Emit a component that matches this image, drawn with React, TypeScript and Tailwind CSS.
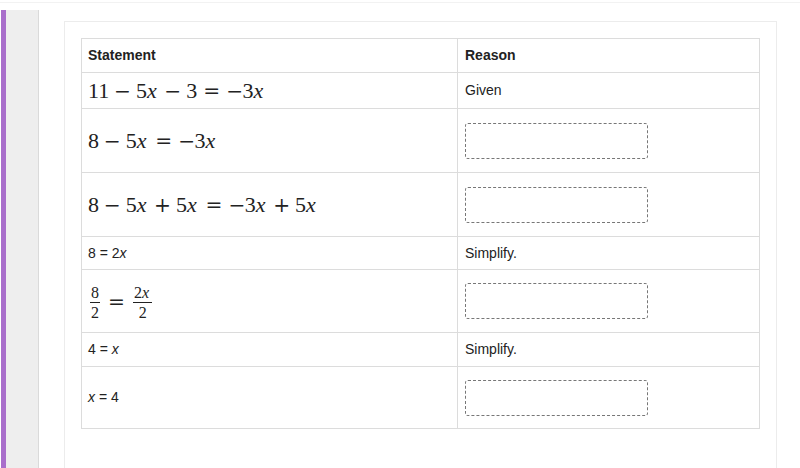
import React from 'react'

const serif = { fontFamily: '"Liberation Serif", "Times New Roman", serif' }
const opFont = { fontFamily: '"DejaVu Serif", "Liberation Serif", serif' }

// glyph boxes sized like the TeX metrics so the equations take the same room
function Minus() {
  return (
    <span style={opFont} className="inline-block w-[0.8em] text-center text-[0.92em]">−</span>
  )
}

function Bin({ op }: { op: string }) {
  return (
    <span style={opFont} className="inline-block mx-[0.2em] w-[0.92em] text-center text-[0.92em]">
      {op}
    </span>
  )
}

function Rel({ op }: { op: string }) {
  return (
    <span style={opFont} className="inline-block mx-[0.26em] w-[0.92em] text-center text-[0.92em]">
      {op}
    </span>
  )
}

function X() {
  return <i className="inline-block w-[0.57em] italic">x</i>
}

function Frac({ top, bottom }: { top: React.ReactNode; bottom: React.ReactNode }) {
  return (
    <span className="inline-flex flex-col items-center align-middle text-[16px] leading-[14px] mx-[2px]">
      <span className="px-[1px] pb-[2px]">{top}</span>
      <span className="h-px w-full bg-[#222]" />
      <span className="px-[1px] pt-[3px]">{bottom}</span>
    </span>
  )
}

function DashedBox() {
  return <div className="w-[183px] h-[36px] rounded-[3px] border border-dashed border-[#777]" />
}

interface Row {
  statement: React.ReactNode
  reason: React.ReactNode
  height: string
}

export default function App() {
  const rows: Row[] = [
    {
      statement: (
        <span style={serif} className="text-[22px] whitespace-nowrap">
          11<Bin op="−" />5<X /><Bin op="−" />3<Rel op="=" /><Minus />3<X />
        </span>
      ),
      reason: 'Given',
      height: 'h-[36px]',
    },
    {
      statement: (
        <span style={serif} className="text-[22px] whitespace-nowrap">
          8<Bin op="−" />5<X /><Rel op="=" /><Minus />3<X />
        </span>
      ),
      reason: <DashedBox />,
      height: 'h-[64px]',
    },
    {
      statement: (
        <span style={serif} className="text-[22px] whitespace-nowrap">
          8<Bin op="−" />5<X /><Bin op="+" />5<X /><Rel op="=" /><Minus />3<X /><Bin op="+" />5<X />
        </span>
      ),
      reason: <DashedBox />,
      height: 'h-[64px]',
    },
    {
      statement: (
        <span>
          8 = 2<i>x</i>
        </span>
      ),
      reason: 'Simplify.',
      height: 'h-[33px]',
    },
    {
      statement: (
        <span style={serif} className="inline-flex items-center text-[22px] whitespace-nowrap">
          <Frac top="8" bottom="2" />
          <Rel op="=" />
          <Frac top={<>2<i className="inline-block w-[0.57em]">x</i></>} bottom="2" />
        </span>
      ),
      reason: <DashedBox />,
      height: 'h-[63px]',
    },
    {
      statement: (
        <span>
          4 = <i>x</i>
        </span>
      ),
      reason: 'Simplify.',
      height: 'h-[34px]',
    },
    {
      statement: (
        <span>
          <i>x</i> = 4
        </span>
      ),
      reason: <DashedBox />,
      height: 'h-[62px]',
    },
  ]

  return (
    <div
      className="w-[800px] h-[468px] overflow-hidden bg-white flex flex-col text-[#222]"
      style={{ fontFamily: '"Liberation Sans", Arial, sans-serif' }}
    >
      <div className="h-[2px]" />
      <div className="h-px bg-[#f2f2f2]" />
      <div className="flex flex-1 mt-[7px]">
        <div className="w-[5px] ml-px bg-[#a96fcb]" />
        <div className="w-[33px] bg-[#eeeeee] border-r border-[#dadada]" />
        <div className="flex-1 pl-[25px] pt-[11px]">
          <div className="w-[713px] h-full border-t border-x border-[#ececec] pl-4 pt-4">
            <table className="w-[679px] border-collapse text-[14px] table-fixed">
              <colgroup>
                <col className="w-[376px]" />
                <col />
              </colgroup>
              <thead>
                <tr className="h-[34px]">
                  <th className="border border-[#dcdcdc] text-left font-bold pl-[6px] align-middle">Statement</th>
                  <th className="border border-[#dcdcdc] text-left font-bold pl-[7px] align-middle">Reason</th>
                </tr>
              </thead>
              <tbody>
                {rows.map((row, i) => (
                  <tr key={i} className={row.height}>
                    <td className="border border-[#dcdcdc] pl-[6px] align-middle">{row.statement}</td>
                    <td className="border border-[#dcdcdc] pl-[7px] align-middle">{row.reason}</td>
                  </tr>
                ))}
              </tbody>
            </table>
          </div>
        </div>
      </div>
    </div>
  )
}
